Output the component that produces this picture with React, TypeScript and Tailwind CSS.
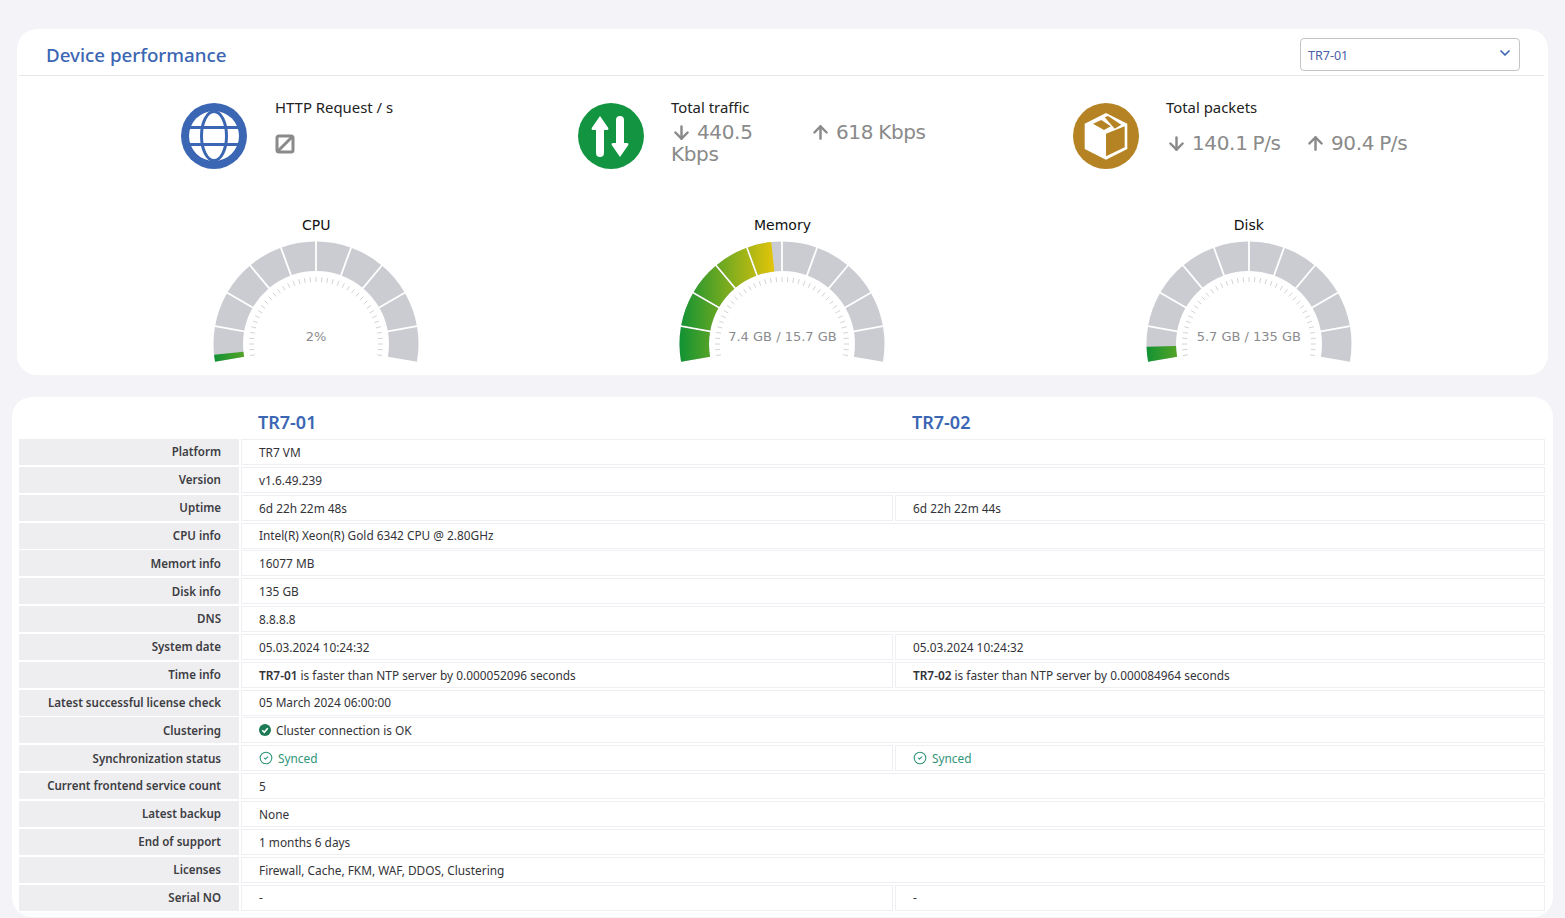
import React from "react";
import { ArrowDown, ArrowUp, ChevronDown, CircleCheck } from "lucide-react";

const rowsData: { label: string; a: React.ReactNode; b?: React.ReactNode }[] = [
  { label: "Platform", a: "TR7 VM" },
  { label: "Version", a: "v1.6.49.239" },
  { label: "Uptime", a: "6d 22h 22m 48s", b: "6d 22h 22m 44s" },
  { label: "CPU info", a: "Intel(R) Xeon(R) Gold 6342 CPU @ 2.80GHz" },
  { label: "Memort info", a: "16077 MB" },
  { label: "Disk info", a: "135 GB" },
  { label: "DNS", a: "8.8.8.8" },
  { label: "System date", a: "05.03.2024 10:24:32", b: "05.03.2024 10:24:32" },
  {
    label: "Time info",
    a: (
      <span>
        <b className="font-semibold">TR7-01</b> is faster than NTP server by 0.000052096 seconds
      </span>
    ),
    b: (
      <span>
        <b className="font-semibold">TR7-02</b> is faster than NTP server by 0.000084964 seconds
      </span>
    ),
  },
  { label: "Latest successful license check", a: "05 March 2024 06:00:00" },
  {
    label: "Clustering",
    a: (
      <span className="flex items-center gap-[5px]">
        <svg viewBox="0 0 24 24" className="w-[12px] h-[12px] -mt-[3px]">
          <circle cx="12" cy="12" r="12" fill="#1c7a55" />
          <path d="M6.5 12.5l4 4 7-8" fill="none" stroke="#fff" strokeWidth="3.4" />
        </svg>
        Cluster connection is OK
      </span>
    ),
  },
  { label: "Synchronization status", a: <Synced />, b: <Synced /> },
  { label: "Current frontend service count", a: "5" },
  { label: "Latest backup", a: "None" },
  { label: "End of support", a: "1 months 6 days" },
  { label: "Licenses", a: "Firewall, Cache, FKM, WAF, DDOS, Clustering" },
  { label: "Serial NO", a: "-", b: "-" },
];

function Synced() {
  return (
    <span className="flex items-center gap-[5px] text-[#2f9478]">
      <CircleCheck size={14} strokeWidth={1.8} className="-mt-[2px]" />
      Synced
    </span>
  );
}

const CX = 105;
const CY = 105;
const R_OUT = 102.5;
const R_IN = 73;
const DEG = 180 / Math.PI;

const pt = (r: number, deg: number) => {
  const t = deg / DEG;
  return `${(CX + r * Math.cos(t)).toFixed(2)} ${(CY - r * Math.sin(t)).toFixed(2)}`;
};

// annular sector, angle runs clockwise from a to b (degrees, a > b). ga/gb are px trimmed off each side
const sector = (a: number, b: number, ga = 0, gb = 0) => {
  const oa = a - (ga * DEG) / R_OUT;
  const ob = b + (gb * DEG) / R_OUT;
  const ia = a - (ga * DEG) / R_IN;
  const ib = b + (gb * DEG) / R_IN;
  return `M${pt(R_OUT, oa)} A${R_OUT} ${R_OUT} 0 0 1 ${pt(R_OUT, ob)} L${pt(R_IN, ib)} A${R_IN} ${R_IN} 0 0 0 ${pt(R_IN, ia)} Z`;
};

const GAP = 0.9;

function Gauge({ id, label, value, pct }: { id: string; label: string; value: string; pct: number }) {
  const end = 190 - 2 * pct;
  const segs = Array.from({ length: 10 }, (_, i) => 190 - i * 20);
  const ticks = Array.from({ length: 41 }, (_, i) => 190 - i * 5);
  return (
    <div className="flex flex-col items-center">
      <div className="text-[14px] leading-[20px] -mt-[1px] mb-[1px] text-[#111] font-['DejaVu_Sans',sans-serif]">{label}</div>
      <div className="relative w-[210px] h-[125px] mt-[3px]">
        <svg width="210" height="125" viewBox="0 0 210 125">
          <defs>
            <linearGradient id={id} gradientUnits="userSpaceOnUse" x1="2" y1="0" x2="208" y2="0">
              <stop offset="0" stopColor="#0f9234" />
              <stop offset="0.46" stopColor="#e2c40a" />
              <stop offset="1" stopColor="#e23a2a" />
            </linearGradient>
          </defs>
          {segs.map((a) => (
            <path key={a} d={sector(a, a - 20, a === 190 ? 0 : GAP, a === 10 ? 0 : GAP)} fill="#cbccd2" />
          ))}
          {segs
            .filter((a) => a > end)
            .map((a) => {
              const b = Math.max(a - 20, end);
              return (
                <path
                  key={a}
                  d={sector(a, b, a === 190 ? 0 : GAP, b === a - 20 ? GAP : 0)}
                  fill={`url(#${id})`}
                />
              );
            })}
          {ticks.map((a) => {
            const t = a / DEG;
            return (
              <line
                key={a}
                x1={CX + 62 * Math.cos(t)}
                y1={CY - 62 * Math.sin(t)}
                x2={CX + 67 * Math.cos(t)}
                y2={CY - 67 * Math.sin(t)}
                stroke="#d4d4d8"
                strokeWidth="1"
              />
            );
          })}
        </svg>
        <div className="absolute left-0 right-0 top-[89px] text-center text-[13px] leading-[18px] text-[#8b8b8f] font-['DejaVu_Sans',sans-serif] whitespace-nowrap">
          {value}
        </div>
      </div>
    </div>
  );
}

function Rate({ up, children }: { up?: boolean; children: React.ReactNode }) {
  const Icon = up ? ArrowUp : ArrowDown;
  return (
    <div className="w-[139px] pr-[20px] text-[20px] leading-[22px] text-[#8a8a8a] font-['DejaVu_Sans',sans-serif] tracking-[-0.35px] [word-spacing:-1px]">
      <Icon size={21} strokeWidth={2.8} className="inline-block align-[-4px] mr-[5px]" />
      {children}
    </div>
  );
}

export default function App() {
  return (
    <div className="min-h-[918px] bg-[#f3f3f8] pt-[29px] font-['Noto_Sans',sans-serif] overflow-hidden">
      <div className="ml-[17px] w-[1531px] h-[346px] bg-white rounded-[20px]">
        <div className="mx-[2px] w-[1525px] h-[47px] border-b border-[#e6e6e8] flex items-center justify-between pl-[27px] pr-[24px]">
          <h1 className="text-[18.75px] font-medium text-[#3b66b3] mt-[7px]">Device performance</h1>
          <div className="w-[220px] h-[33px] border border-[#c4c4c8] rounded-[4px] flex items-center justify-between pl-[7px] pr-[6px] pt-[3px] text-[12.5px] text-[#4c5ea8] mt-[5px]">
            TR7-01
            <ChevronDown size={16} strokeWidth={2.6} className="text-[#3b66b3] -mt-[7px]" />
          </div>
        </div>

        <div className="grid grid-cols-[561px_495px_1fr] pt-[27px] h-[129px]">
          <div className="flex pl-[164px]">
            <svg viewBox="0 0 66 66" className="w-[66px] h-[66px] shrink-0">
              <circle cx="33" cy="33" r="33" fill="#3b66b3" />
              <circle cx="33" cy="33" r="25" fill="#fff" />
              <ellipse cx="33" cy="33" rx="12.5" ry="24.5" fill="none" stroke="#3b66b3" strokeWidth="3" />
              <path d="M9 24.5h48M9 41.5h48" stroke="#3b66b3" strokeWidth="3" />
            </svg>
            <div className="ml-[28px]">
              <div className="text-[14.9px] leading-[10px] -mt-[1px] text-[#222]">HTTP Request / s</div>
              <svg viewBox="0 0 20 20" className="w-[20px] h-[20px] mt-[22px]">
                <rect x="2" y="2" width="16" height="16" rx="2" fill="none" stroke="#8a8a8a" strokeWidth="3" />
                <path d="M3 17L17 3" stroke="#8a8a8a" strokeWidth="3" />
              </svg>
            </div>
          </div>

          <div className="flex">
            <svg viewBox="0 0 66 66" className="w-[66px] h-[66px] shrink-0">
              <circle cx="33" cy="33" r="33" fill="#129440" />
              <path d="M22 13L13.7 25Q13 27 15 27H18V50a4 4 0 0 0 8 0V27H29Q31 27 30.3 25Z" fill="#fff" />
              <path d="M42 54L33.7 42Q33 40 35 40H38V17a4 4 0 0 1 8 0V40H49Q51 40 50.3 42Z" fill="#fff" />
            </svg>
            <div className="ml-[27px]">
              <div className="text-[14.9px] leading-[10px] -mt-[1px] text-[#222]">Total traffic</div>
              <div className="flex mt-[9px]">
                <Rate>440.5 Kbps</Rate>
                <Rate up>618 Kbps</Rate>
              </div>
            </div>
          </div>

          <div className="flex">
            <svg viewBox="0 0 66 66" className="w-[66px] h-[66px] shrink-0">
              <circle cx="33" cy="33" r="33" fill="#b58324" />
              <path d="M33 10L54.3 20.7V46L33 56.7L11.7 46V20.7Z" fill="#fff" />
              <path d="M33 30.7L51.7 23.3V44.3L33 53.3Z" fill="#b58324" />
              <path d="M20 20.7L28.3 17L37.7 23.3L31 27Z" fill="#b58324" />
              <path d="M31.7 14.3L35 13L48.3 21.7L41.7 25.7Z" fill="#b58324" />
            </svg>
            <div className="ml-[27px]">
              <div className="text-[14.9px] leading-[10px] -mt-[1px] text-[#222]">Total packets</div>
              <div className="flex mt-[20px]">
                <Rate>140.1 P/s</Rate>
                <Rate up>90.4 P/s</Rate>
              </div>
            </div>
          </div>
        </div>

        <div className="grid grid-cols-3 px-[66px] mt-[11px]">
          <Gauge id="g-cpu" label="CPU" value="2%" pct={2} />
          <Gauge id="g-mem" label="Memory" value="7.4 GB / 15.7 GB" pct={47} />
          <Gauge id="g-disk" label="Disk" value="5.7 GB / 135 GB" pct={4.2} />
        </div>
      </div>

      <div className="ml-[12px] mt-[22px] w-[1541px] h-[520px] bg-white rounded-[20px] pl-[7px] pr-[8px]">
        <div className="h-[42px] flex items-end pb-[4px] text-[18px] leading-[26px] font-semibold text-[#3b66b3]">
          <div className="w-[239px] shrink-0" />
          <div className="w-[654px] shrink-0">TR7-01</div>
          <div>TR7-02</div>
        </div>
        <div className="flex flex-col gap-[1.85px]">
          {rowsData.map((r) => (
            <div key={r.label} className="flex h-[26px] gap-[2px] text-[11.85px]">
              <div className="w-[220px] shrink-0 bg-[#eeeef1] flex items-center justify-end pr-[18px] text-[11.55px] font-semibold text-[#3d3d42]">
                {r.label}
              </div>
              <div className="flex-1 flex gap-[2px] text-[#333338]">
                <div className="flex-1 border border-[#eeeef3] flex items-center pl-[17px] pt-[1.5px]">{r.a}</div>
                {r.b !== undefined && (
                  <div className="w-[650px] shrink-0 border border-[#eeeef3] flex items-center pl-[17px] pt-[1.5px]">{r.b}</div>
                )}
              </div>
            </div>
          ))}
        </div>
      </div>
    </div>
  );
}
